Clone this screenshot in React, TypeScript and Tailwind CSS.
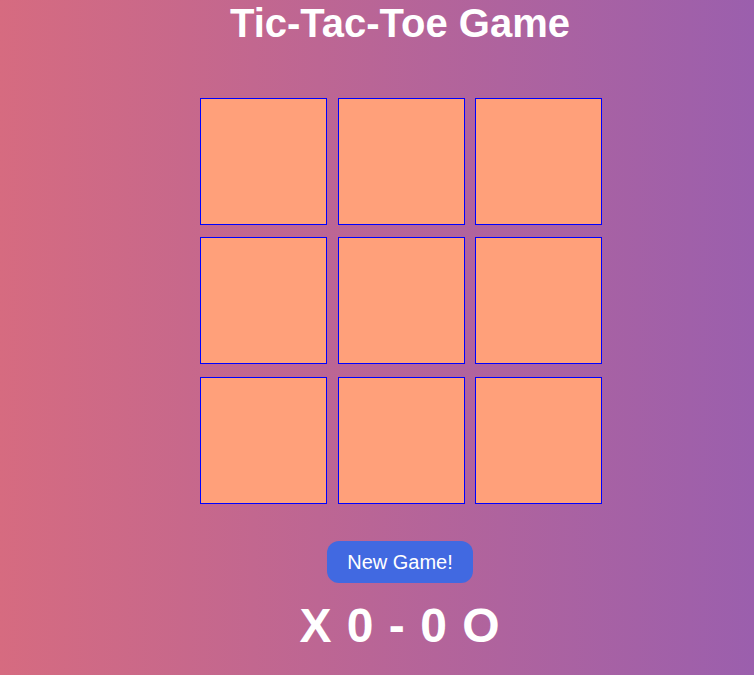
import React from "react";

export default function App() {
  const cells = Array.from({ length: 9 });
  return (
    <div
      className="min-h-[675px] w-full overflow-hidden bg-[linear-gradient(to_right,#d66b80,#9b5fad)] pl-[46px] flex flex-col items-center"
      style={{ fontFamily: '"Liberation Sans", Arial, sans-serif' }}
    >
      <h1 className="m-0 text-[40px] font-bold leading-[46px] text-white">Tic-Tac-Toe Game</h1>
      <div className="ml-[2px] mt-[52px] grid grid-cols-[127px_127px_127px] gap-x-[10.5px] gap-y-[12.4px]">
        {cells.map((_, i) => (
          <div key={i} className="h-[127px] w-[127px] border border-[#0000ff] bg-[#ffa07a]" />
        ))}
      </div>
      <button className="mt-[37px] h-[42px] w-[146px] rounded-[12px] bg-[#4169e1] text-[20px] leading-none text-white">
        New Game!
      </button>
      <div className="mt-[15px] text-[48px] font-bold leading-[55px] tracking-[1px] text-white">X 0 - 0 O</div>
    </div>
  );
}
